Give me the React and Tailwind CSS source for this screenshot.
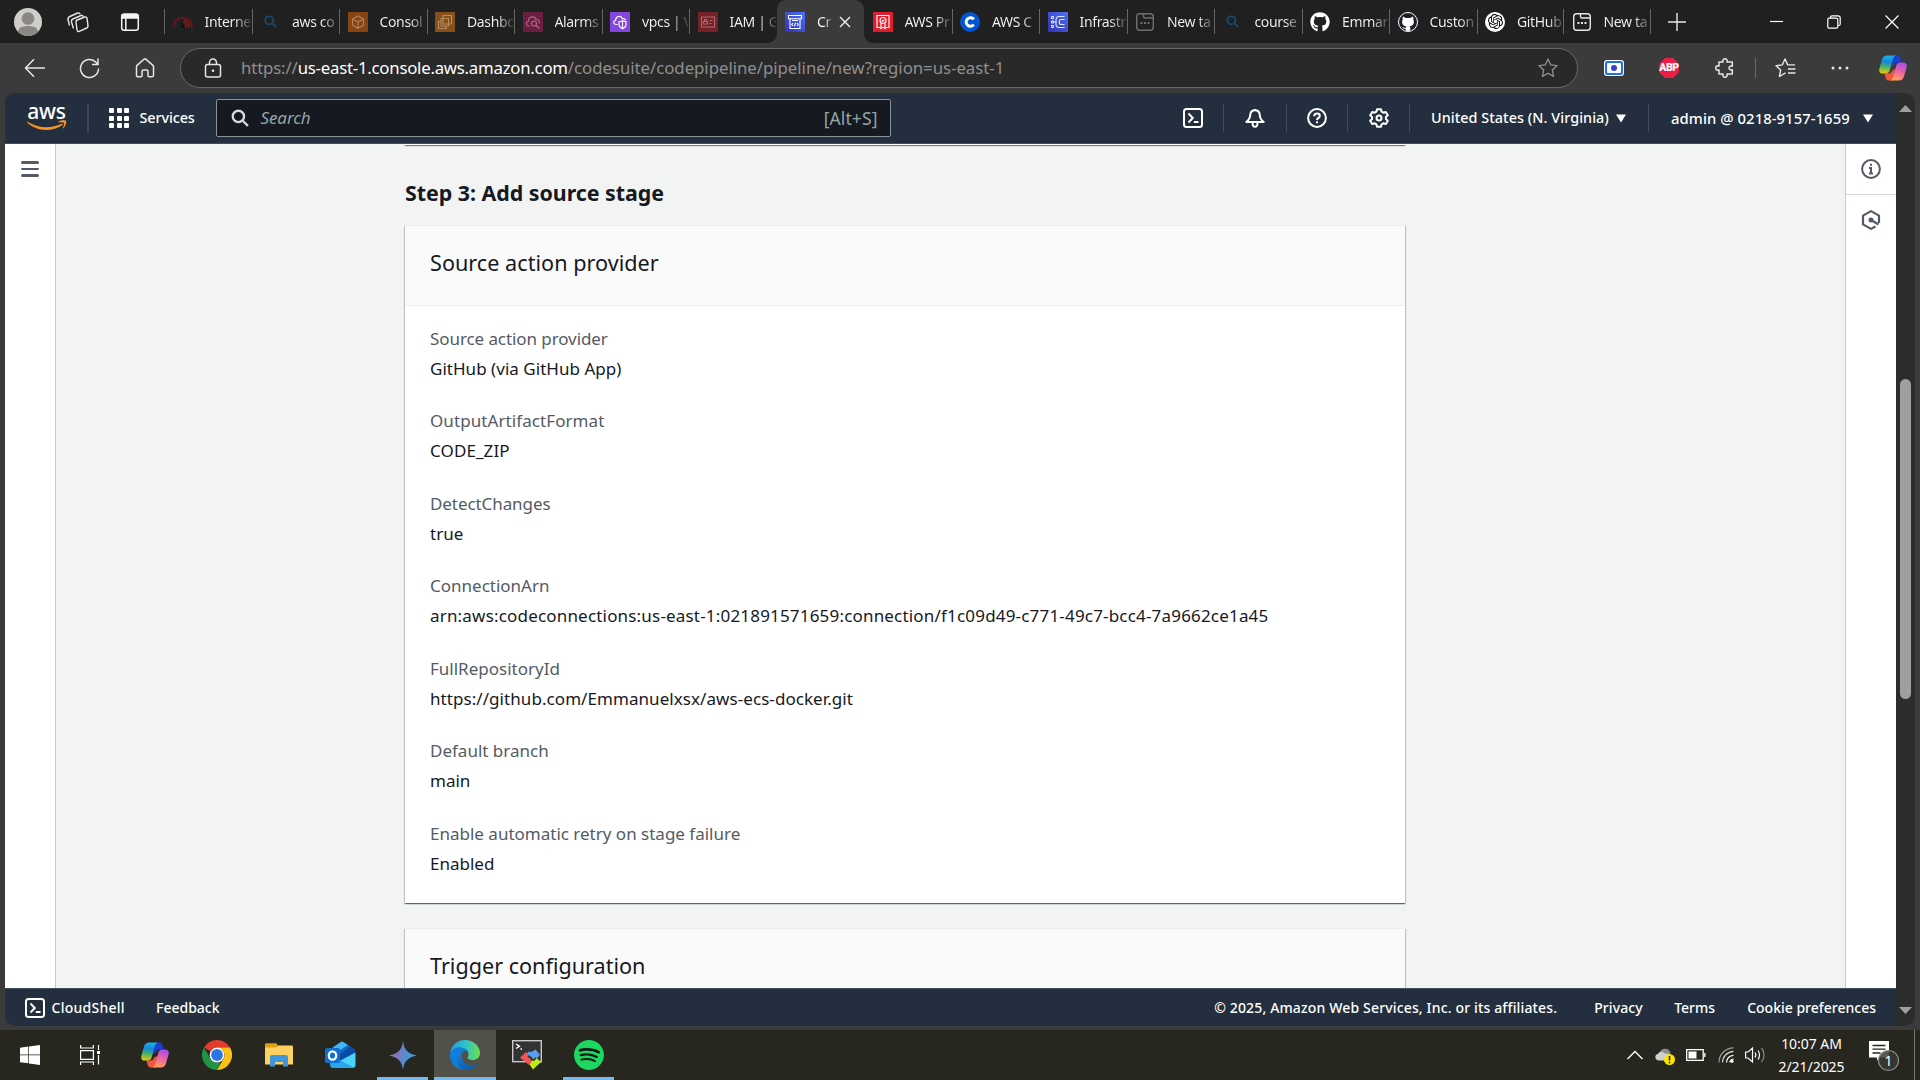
import React from "react";
import { FaGithub } from "react-icons/fa";
import { SiOpenai, SiSpotify } from "react-icons/si";

/* ---------- small shared drawings ---------- */

function CopilotIcon({ id, size }) {
  return (
    <svg width={size} height={size} viewBox="0 0 28 28">
      <defs>
        <linearGradient id={id + "a"} x1="0.4" y1="0" x2="0.3" y2="1">
          <stop offset="0" stopColor="#17b0ee" />
          <stop offset="0.35" stopColor="#1688d8" />
          <stop offset="0.65" stopColor="#4fb45c" />
          <stop offset="1" stopColor="#f3c90b" />
        </linearGradient>
        <linearGradient id={id + "b"} x1="0.7" y1="0" x2="0.4" y2="1">
          <stop offset="0" stopColor="#a04df2" />
          <stop offset="0.45" stopColor="#e95fa8" />
          <stop offset="1" stopColor="#ffa15c" />
        </linearGradient>
      </defs>
      <path d="M14 1.5h4.2c1.6 0 2.6 1 3.1 2.6l1.3 4.4h-4c-2 0-3.2.9-3.8 2.9L12 13z" fill="#1a3fd0" />
      <path d="M14 26.5H9.8c-1.600 0-2.600-1-3.100-2.600L5.400 19.500h4c2 0 3.200-.9 3.800-2.900L16 15z" fill="#f0573c" />
      <path d="M8.200 1.500h9.300c-1.800 0-2.900 1.300-3.500 3.300l-3.200 11.300c-.6 2.200-1.800 3.500-3.900 3.500H3.600C1 19.600-.3 17.500.4 14.700L3 5.600C3.800 2.900 5.600 1.500 8.200 1.500z" fill={"url(#" + id + "a)"} />
      <path d="M19.800 26.500h-9.300c1.800 0 2.900-1.300 3.500-3.300l3.200-11.300c.6-2.200 1.800-3.500 3.900-3.500h3.300c2.600 0 3.900 2.100 3.200 4.900L25 22.400c-.8 2.700-2.600 4.100-5.200 4.100z" fill={"url(#" + id + "b)"} />
    </svg>
  );
}

function CloudShellIcon() {
  return (
    <svg width="20" height="20" viewBox="0 0 20 20" fill="none" stroke="#fff" strokeWidth="2">
      <rect x="1" y="1" width="18" height="18" rx="2.500" />
      <path d="M5.500 5.500L9.800 10l-4.300 4.500M10.800 14h4.700" />
    </svg>
  );
}

function MagnifierIcon({ className }) {
  return (
    <svg className={className} viewBox="0 0 20 20" fill="none" stroke="currentColor" strokeWidth="2.600">
      <circle cx="8.200" cy="8.200" r="6.300" />
      <path d="M12.800 12.800l6 6" />
    </svg>
  );
}

/* ---------- favicons ---------- */

const gaugeIcon = (
  <svg width="20" height="20" viewBox="0 0 20 20" fill="none">
    <path d="M1 15.500C1 9 5 5.500 10 5.500s9 3.500 9 10" stroke="#74161d" strokeWidth="1.600" />
    <path d="M11 8c3 .5 5 3 5.300 7.500M10.500 10.500c1.800.5 3 2.300 3.200 5" stroke="#8b1c25" strokeWidth="1.500" />
    <path d="M8 8.500v7.500h4z" fill="#111" />
  </svg>
);
const searchFavicon = (
  <div className="flex size-5 items-center justify-center">
    <MagnifierIcon className="size-[13px] text-[#1b4a70]" />
  </div>
);
const cubeIcon = (
  <svg width="20" height="20" viewBox="0 0 20 20" fill="none" stroke="#b0835c">
    <rect width="20" height="20" fill="#854412" stroke="none" />
    <path d="M10 4l5.500 3v6.200L10 16.300l-5.500-3.100V7zM4.500 7l5.500 3 5.500-3M10 10v6.300" strokeWidth="1.200" />
  </svg>
);
const dashboardIcon = (
  <svg width="20" height="20" viewBox="0 0 20 20" fill="none" stroke="#b68c60">
    <rect width="20" height="20" fill="#85501a" stroke="none" />
    <path d="M8 3.500h8.500V12H8zM6 6.500h7.500V14H6zM5.500 9.500h-2v7H11v-2" strokeWidth="1.100" />
  </svg>
);
const alarmsIcon = (
  <svg width="20" height="20" viewBox="0 0 20 20" fill="none" stroke="#a8688a">
    <rect width="20" height="20" fill="#6b1e3f" stroke="none" />
    <path d="M7 14H5.500C2.500 13.500 2.700 9.800 5.300 9.500 5.500 4 12 3.500 13 7.500c2.500 0 4 2 3.300 4" strokeWidth="1.200" />
    <circle cx="11" cy="11.500" r="2.500" strokeWidth="1.200" />
    <path d="M13 13.500l3.500 3" strokeWidth="1.400" />
  </svg>
);
const vpcIcon = (
  <svg width="20" height="20" viewBox="0 0 20 20" fill="none" stroke="#fff">
    <rect width="20" height="20" fill="#8347e0" stroke="none" />
    <path d="M7.500 12.500H6C3 12.200 3 8.800 5.500 8.500 5.700 4 11 3 12.300 6.700c1.500-.2 3 .6 3.400 1.800" strokeWidth="1.200" />
    <path d="M9 9.500c2 0 3-.8 3.500-.8s1.500.8 3.500.8v3.200c0 2-1.500 3-3.500 4-2-1-3.500-2-3.500-4zM12.500 8.700v8" strokeWidth="1.100" />
  </svg>
);
const iamIcon = (
  <svg width="20" height="20" viewBox="0 0 20 20" fill="none" stroke="#b0686c">
    <rect width="20" height="20" fill="#74222a" stroke="none" />
    <path d="M3.500 5h13v10h-13zM11.500 8.500h3M11.500 11.500h2M5.500 9.500h4V12h-4zM6.500 9.500V7.500h2v2" strokeWidth="1.100" />
  </svg>
);
const pipelineIcon = (
  <svg width="20" height="20" viewBox="0 0 20 20" fill="none" stroke="#fff">
    <defs>
      <linearGradient id="pipe" x1="0" y1="1" x2="1" y2="0">
        <stop offset="0" stopColor="#3030b8" />
        <stop offset="1" stopColor="#4d72f3" />
      </linearGradient>
    </defs>
    <rect width="20" height="20" fill="url(#pipe)" stroke="none" />
    <path d="M3.500 3.500h13v3.200h-13zM5 6.700v9.800h10V6.700M7 8.500h6M8 11l-1.300 1.500L8 14M12 11l1.300 1.500L12 14M10.600 10.800l-1.200 3.400" strokeWidth="1.100" />
  </svg>
);
const certIcon = (
  <svg width="20" height="20" viewBox="0 0 20 20" fill="none" stroke="#fff">
    <rect width="20" height="20" fill="#df1f2d" stroke="none" />
    <path d="M7.500 15.500H4v-12h12v12h-3.500" strokeWidth="1.100" />
    <circle cx="10" cy="8.500" r="3" strokeWidth="1.100" />
    <path d="M8.700 8.500l1 1 1.700-2M8 11.500v5l2-1.200 2 1.200v-5" strokeWidth="1.100" />
  </svg>
);
const courseraIcon = (
  <svg width="20" height="20" viewBox="0 0 20 20" fill="none">
    <circle cx="10" cy="10" r="10" fill="#0056d2" />
    <path d="M13.800 7.300A4.300 4.300 0 1 0 13.800 12.700" stroke="#fff" strokeWidth="2.900" />
  </svg>
);
const infraIcon = (
  <svg width="20" height="20" viewBox="0 0 20 20" fill="none" stroke="#e4e8ff" strokeWidth="1.100">
    <rect width="20" height="20" fill="url(#pipe)" stroke="none" />
    <circle cx="4.500" cy="5.500" r="1.100" />
    <circle cx="4.500" cy="10" r="1.100" />
    <circle cx="4.500" cy="14.500" r="1.100" />
    <path d="M5.800 10H8M16.500 4.500h-5.500a3 3 0 0 0-3 3v5a3 3 0 0 0 3 3h5.500" />
    <path d="M16.500 7.500h-3.500c-1 0-1.700.7-1.700 1.700v1.600c0 1 .7 1.700 1.700 1.700h3.500" />
  </svg>
);
function NewTabIcon({ color }) {
  return (
    <svg width="20" height="20" viewBox="0 0 20 20" fill="none" stroke={color} strokeWidth="1.400">
      <rect x="1.700" y="1.700" width="16.600" height="16.600" rx="3" />
      <path d="M8.500 2v2.500c0 1 .5 1.500 1.500 1.500h8" />
      <path d="M5.500 11h2M9 11h2M12.500 11h2" strokeWidth="2" />
    </svg>
  );
}
const githubIcon = <FaGithub className="size-5 text-white" />;
const githubBadge = (
  <div className="flex size-5 items-end justify-center overflow-hidden rounded-full border border-white bg-[#1b1f2a]">
    <svg width="14" height="16" viewBox="0 0 14 16" fill="#fff">
      <path d="M2 1.500L4.800 3h4.400L12 1.500c.6 1.300.5 2.500.3 3.200 1.500 2.800.3 6-3.600 6.500.4.5.6 1.200.6 2V16H4.700v-2.200c-2 .3-2.700-.8-3.200-1.800 1.500.5 2.200 1.200 3.300.8 0-.7.2-1.200.5-1.600-3.900-.5-5.100-3.700-3.600-6.500C1.500 4 1.400 2.800 2 1.500z" />
    </svg>
  </div>
);
const openaiBadge = (
  <div className="flex size-5 items-center justify-center rounded-full bg-white">
    <SiOpenai className="size-[15px] text-black" />
  </div>
);

const tabs = [
  { icon: gaugeIcon, title: "Interne" },
  { icon: searchFavicon, title: "aws co" },
  { icon: cubeIcon, title: "Consol" },
  { icon: dashboardIcon, title: "Dashbo" },
  { icon: alarmsIcon, title: "Alarms" },
  { icon: vpcIcon, title: "vpcs | V" },
  { icon: iamIcon, title: "IAM | G" },
  { icon: pipelineIcon, title: "Cr", active: true },
  { icon: certIcon, title: "AWS Pr", noSep: true },
  { icon: courseraIcon, title: "AWS C" },
  { icon: infraIcon, title: "Infrastr" },
  { icon: <NewTabIcon color="#6e6e6e" />, title: "New ta" },
  { icon: searchFavicon, title: "course" },
  { icon: githubIcon, title: "Emmar" },
  { icon: githubBadge, title: "Custon" },
  { icon: openaiBadge, title: "GitHub", narrow: true },
  { icon: <NewTabIcon color="#e6e6e6" />, title: "New ta", narrow: true },
];

function Tab({ icon, title, active, noSep, narrow }) {
  if (active) {
    return (
      <div className="relative flex h-[43px] w-[87.500px] shrink-0 items-center rounded-t-[9px] bg-[#3b3b3b] pl-2">
        <svg className="absolute bottom-0 -left-2.5" width="10" height="10" viewBox="0 0 10 10">
          <path d="M10 0v10H0C6 10 10 6 10 0z" fill="#3b3b3b" />
        </svg>
        <svg className="absolute -right-2.5 bottom-0" width="10" height="10" viewBox="0 0 10 10">
          <path d="M0 0v10h10C4 10 0 6 0 0z" fill="#3b3b3b" />
        </svg>
        <div className="size-5 shrink-0">{icon}</div>
        <div className="ml-[12.500px] w-[15px] bg-gradient-to-r from-white from-50% to-[#666] bg-clip-text text-[14px] tracking-[-0.3px] whitespace-nowrap text-transparent">
          {title}
        </div>
        <svg className="ml-[7px]" width="12" height="12" viewBox="0 0 12 12" stroke="#f2f2f2" strokeWidth="1.400">
          <path d="M1 1l10 10M11 1L1 11" />
        </svg>
      </div>
    );
  }
  return (
    <div className={"flex h-[43px] shrink-0 items-center " + (narrow ? "w-[86.500px]" : "w-[87.500px]")}>
      <div className={noSep ? "h-[25px] w-px" : "h-[25px] w-px bg-[#666]"} />
      <div className="ml-[7.500px] size-5 shrink-0">{icon}</div>
      <div className="ml-3 w-[46px] bg-gradient-to-r from-[#f4f4f4] from-65% to-[#444] bg-clip-text text-[14px] tracking-[-0.350px] whitespace-nowrap text-transparent">
        {title}
      </div>
    </div>
  );
}

function TabStrip() {
  return (
    <div className="flex h-[43px] shrink-0 items-center bg-[#202020]">
      <div className="ml-3.5 size-7 overflow-hidden rounded-full bg-[#cfcdca]">
        <svg width="28" height="28" viewBox="0 0 28 28" fill="#8b8783">
          <circle cx="14" cy="10.500" r="6.300" />
          <path d="M4 24c0-4 4-6 10-6s10 2 10 6c-2.500 3-6 4-10 4s-7.500-1-10-4z" />
        </svg>
      </div>
      <svg className="ml-[25px]" width="22" height="22" viewBox="0 0 22 22" fill="#202020" stroke="#e8e8e8" strokeWidth="1.400" strokeLinejoin="round">
        <path d="M2.500 14.500L1 8.500C.8 7 1.500 6 2.800 5.500l8-3.500c1-.3 2 .2 2.300 1.200" fill="none" />
        <path d="M6.500 17.500L4.500 11c-.3-1.500.2-2.500 1.500-3l8-3.500c1-.3 2 .2 2.300 1.200" fill="none" />
        <path d="M9 11.500c-.3-1.300.2-2 1.200-2.500l7.600-3c1-.3 2 .2 2.200 1.200l1 7.600c.1 1-.4 1.900-1.200 2.200l-7.600 3.400c-1 .4-1.900-.2-2.100-1.200z" />
      </svg>
      <svg className="ml-[31px]" width="20" height="20" viewBox="0 0 20 20" fill="none" stroke="#f4f4f4" strokeWidth="1.500">
        <rect x="1.700" y="2.200" width="16.600" height="16" rx="2.500" />
        <path d="M1.700 6V4.500A2.500 2.500 0 0 1 4 2.200h12a2.500 2.500 0 0 1 2.300 2.300V6z" fill="#f4f4f4" />
        <path d="M5.800 6v12" />
      </svg>
      <div className="ml-6 flex">
        {tabs.map((t, i) => (
          <Tab key={i} {...t} />
        ))}
      </div>
      <div className="h-[25px] w-px bg-[#666]" />
      <svg className="ml-[17.500px]" width="18" height="18" viewBox="0 0 18 18" stroke="#e8e8e8" strokeWidth="1.400">
        <path d="M0 9h18M9 0v18" />
      </svg>
      <svg className="ml-[84px]" width="13" height="13" viewBox="0 0 13 13" stroke="#fff" strokeWidth="1.200">
        <path d="M0 6.500h13" />
      </svg>
      <svg className="ml-11" width="14" height="14" viewBox="0 0 14 14" fill="none" stroke="#fff" strokeWidth="1.200">
        <rect x="0.800" y="3.200" width="10" height="10" rx="1.500" />
        <path d="M3.500 3V2.300C3.500 1.400 4 .8 5 .8h6c1.400 0 2.200.8 2.200 2.200v6c0 1-.6 1.500-1.500 1.500H11" />
      </svg>
      <svg className="ml-[44px]" width="14" height="14" viewBox="0 0 14 14" stroke="#fff" strokeWidth="1.200">
        <path d="M.5.5l13 13M13.500.5l-13 13" />
      </svg>
    </div>
  );
}

function Toolbar() {
  return (
    <div className="flex h-[50px] shrink-0 items-center bg-[#3b3b3b]">
      <svg className="ml-6" width="22" height="20" viewBox="0 0 22 20" fill="none" stroke="#e6e6e6" strokeWidth="1.500">
        <path d="M10 1.200L1.500 10l8.500 8.800M1.500 10H21" />
      </svg>
      <svg className="ml-[33px]" width="21" height="21" viewBox="0 0 21 21" fill="none" stroke="#e6e6e6" strokeWidth="1.500">
        <path d="M19.500 10.500a9 9 0 1 1-2.500-6.200L19 6.500M19 .5v6h-6" />
      </svg>
      <svg className="ml-[35px]" width="20" height="20" viewBox="0 0 20 20" fill="none" stroke="#e6e6e6" strokeWidth="1.500" strokeLinejoin="round">
        <path d="M1.500 8.800c0-.7.3-1.200.8-1.700L9 1.300c.6-.5 1.400-.5 2 0l6.700 5.800c.5.500.8 1 .8 1.700v8.400c0 1-.6 1.600-1.600 1.600h-2.700c-.7 0-1.200-.5-1.200-1.200v-4.400c0-.7-.5-1.200-1.200-1.200H8.200c-.7 0-1.200.5-1.200 1.200v4.400c0 .7-.5 1.200-1.200 1.200H3.100c-1 0-1.600-.6-1.600-1.600z" />
      </svg>
      <div className="ml-[25px] flex h-10 w-[1398px] items-center rounded-full border border-[#686868] bg-[#292929]">
        <svg className="ml-[23px]" width="18" height="20" viewBox="0 0 18 20" fill="none" stroke="#e6e6e6" strokeWidth="1.500">
          <rect x="1.500" y="6.500" width="15" height="12.500" rx="2" />
          <path d="M5.500 6.500V4.500a3.500 3.500 0 0 1 7 0v2" />
          <circle cx="9" cy="12.800" r="1.300" fill="#e6e6e6" stroke="none" />
        </svg>
        <div className="ml-[19px] flex flex-1 text-[16.800px] leading-none text-[#8f8f8f]">
          <span className="tracking-[-0.150px]">https://</span>
          <span className="tracking-[-0.240px] text-white">us-east-1.console.aws.amazon.com</span>
          <span className="tracking-[-0.030px]">/codesuite/codepipeline/pipeline/new?region=us-east-1</span>
        </div>
        <svg className="mr-[19px]" width="20" height="20" viewBox="0 0 20 20" fill="none" stroke="#8f8f8f" strokeWidth="1.300" strokeLinejoin="round">
          <path d="M10 1l2.700 5.900 6.300.8-4.700 4.300 1.300 6.400L10 15.200l-5.600 3.200 1.300-6.400L1 7.700l6.300-.8z" />
        </svg>
      </div>
      <svg className="ml-[26px]" width="20" height="16" viewBox="0 0 20 16">
        <rect width="20" height="16" rx="3" fill="#fff" />
        <rect x="1" y="1" width="18" height="14" rx="2.500" fill="#1d6ff2" />
        <rect x="3" y="3" width="14" height="10" rx="1" fill="#fff" />
        <circle cx="10" cy="8" r="3" fill="#3045c9" />
      </svg>
      <div className="relative ml-[35px] flex size-5 items-center justify-center">
        <svg className="absolute inset-0" width="20" height="20" viewBox="0 0 20 20">
          <path d="M5.900 0h8.200L20 5.900v8.200L14.100 20H5.900L0 14.100V5.900z" fill="#ed1e45" />
        </svg>
        <span className="relative font-['Roboto'] text-[10.500px] leading-none font-black tracking-[-0.5px] text-white">ABP</span>
      </div>
      <svg className="ml-[36px]" width="20" height="20" viewBox="0 0 20 20" fill="none" stroke="#e6e6e6" strokeWidth="1.500" strokeLinejoin="round">
        <path d="M4 4h4c-.5-2 .5-3.300 2-3.300S12.500 2 12 4h5.300v4.200c-1.800-.6-3.300.3-3.300 1.800s1.500 2.400 3.300 1.800V16H12c.5 2-.5 3.300-2 3.300S7.500 18 8 16H4v-4c-2 .5-3.300-.5-3.300-2S2 7.500 4 8z" />
      </svg>
      <div className="ml-5 h-5 w-px bg-[#6a6a6a]" />
      <svg className="ml-[19px]" width="21" height="20" viewBox="0 0 21 20" fill="none" stroke="#e6e6e6" strokeWidth="1.400" strokeLinejoin="round">
        <path d="M10.500 14.800L4.400 18.500 5.700 12 1 7.700l6.300-.8L10 1l2.700 5.900H20M13 11h7.500M13 15h7.500" />
      </svg>
      <svg className="ml-[35px]" width="18" height="4" viewBox="0 0 18 4" fill="#e6e6e6">
        <circle cx="2" cy="2" r="1.500" />
        <circle cx="9" cy="2" r="1.500" />
        <circle cx="16" cy="2" r="1.500" />
      </svg>
      <div className="ml-[30px]">
        <CopilotIcon id="cpTop" size={28} />
      </div>
    </div>
  );
}

function Caret() {
  return (
    <svg width="10" height="9" viewBox="0 0 10 9" fill="#fff">
      <path d="M0 .5h10L5 8.500z" />
    </svg>
  );
}
function Bar() {
  return <div className="h-7 w-px bg-[#414d5c]" />;
}

function AwsHeader() {
  return (
    <div className="flex h-[51px] shrink-0 items-center rounded-tl-[9px] border-b border-[#414d5c] bg-[#232f3e] text-white">
      <div className="ml-[22px] flex w-10 flex-col items-center">
        <div className="-mt-[6px] -ml-[1px] text-[21px] leading-[22px] font-medium tracking-[-0.3px]">aws</div>
        <svg className="-mt-0.5" width="40" height="11" viewBox="0 0 40 11" fill="#f7941d">
          <path d="M.3 1.500C11 8.500 24 9 34.500 3.800c1-.4 1.800.6.9 1.300C25 12.300 9.500 11.800.2 2.600-.2 2 0 1.300.3 1.500z" />
          <path d="M31.500 1.500c2.500-1.600 6.700-1.600 7.500-.7.700.9-.2 5.500-2.600 7.500-.4.300-.8.200-.6-.3.600-1.400 1.700-4.400 1.200-5.100-.5-.6-3.500-.5-5.200-.7-.5-.1-.6-.5-.3-.7z" />
        </svg>
      </div>
      <div className="ml-5 h-7 w-0.5 bg-[#414750]" />
      <div className="ml-5 grid grid-cols-3 gap-[2.500px]">
        {[0, 1, 2, 3, 4, 5, 6, 7, 8].map((i) => (
          <div key={i} className="size-[5px] rounded-[1px] bg-white" />
        ))}
      </div>
      <div className="ml-[10.500px] w-[76px] text-[14.400px] font-medium tracking-[-0.1px]">Services</div>
      <div className="flex h-[38px] w-[675px] items-center rounded-[2px] border border-[#879596] bg-[#161920]">
        <MagnifierIcon className="ml-3.5 size-[18px] text-[#d5dbdb]" />
        <div className="ml-3 flex-1 text-[17px] tracking-[-0.1px] text-[#95a5a6] italic">Search</div>
        <div className="mr-3 text-[17.500px] tracking-[0.1px] text-[#95a5a6]">[Alt+S]</div>
      </div>
      <div className="ml-[292px] flex items-center">
        <CloudShellIcon />
        <div className="ml-5"><Bar /></div>
        <svg className="ml-[21px]" width="20" height="20" viewBox="0 0 20 20" fill="none" stroke="#fff" strokeWidth="2" strokeLinejoin="round">
          <path d="M10 1v1.500M10 2.200c-3 0-4.500 2-4.700 4.500-.2 3.300-1 5-4 7.300h17.400c-3-2.300-3.800-4-4-7.300C14.500 4.200 13 2.200 10 2.200zM7.500 14.500c0 3 1 4.300 2.500 4.300s2.500-1.300 2.500-4.300" />
        </svg>
        <div className="ml-[21px]"><Bar /></div>
        <svg className="ml-5" width="20" height="20" viewBox="0 0 20 20" fill="none" stroke="#fff" strokeWidth="2">
          <circle cx="10" cy="10" r="8.900" />
          <path d="M7.200 8.200C7.200 6.500 8.300 5.600 10 5.600s2.800.9 2.800 2.300c0 2-2.800 2-2.800 4.100M10 13.300v2" />
        </svg>
        <div className="ml-5"><Bar /></div>
        <svg className="ml-[21px]" width="20" height="20" viewBox="0 0 20 20" fill="none" stroke="#fff" strokeWidth="2" strokeLinejoin="round">
          <path d="M8 1.200h4l.6 2.500 1.700 1 2.500-.8 2 3.400-1.900 1.800v1.800l1.900 1.800-2 3.400-2.500-.8-1.700 1-.6 2.500H8l-.6-2.500-1.700-1-2.500.8-2-3.400 1.900-1.800V9.100L1.200 7.300l2-3.400 2.500.8 1.700-1z" />
          <circle cx="10" cy="10" r="2.500" />
        </svg>
        <div className="ml-[20px]"><Bar /></div>
        <div className="ml-[21.500px] w-[185px] text-[14.400px] font-medium tracking-[0.050px] whitespace-nowrap">United States (N. Virginia)</div>
        <Caret />
        <div className="ml-[22px]"><Bar /></div>
        <div className="ml-[22px] w-[191.500px] text-[14.800px] font-medium tracking-[0.080px] whitespace-nowrap">admin @ 0218-9157-1659</div>
        <Caret />
      </div>
    </div>
  );
}

const cardShadow =
  "shadow-[0_1px_1px_0_rgba(0,28,36,0.5),1px_1px_1px_0_rgba(0,28,36,0.15),-1px_1px_1px_0_rgba(0,28,36,0.15)]";

const fields = [
  ["Source action provider", "GitHub (via GitHub App)", "tracking-[0.030px]", "tracking-[-0.080px]"],
  ["OutputArtifactFormat", "CODE_ZIP", "tracking-[0.1px]", "tracking-[0.080px]"],
  ["DetectChanges", "true", "tracking-normal", "tracking-[-0.080px]"],
  ["ConnectionArn", "arn:aws:codeconnections:us-east-1:021891571659:connection/f1c09d49-c771-49c7-bcc4-7a9662ce1a45", "tracking-[0.185px]", "tracking-normal"],
  ["FullRepositoryId", "https://github.com/Emmanuelxsx/aws-ecs-docker.git", "tracking-[0.065px]", "tracking-normal"],
  ["Default branch", "main", "tracking-normal", "tracking-normal"],
  ["Enable automatic retry on stage failure", "Enabled", "tracking-normal", "tracking-normal"],
];

function MainContent() {
  return (
    <div className="flex h-[844px] shrink-0 overflow-hidden bg-[#f2f3f3]">
      <div className="w-[51px] shrink-0 border-r border-[#c3c9ca] bg-white">
        <div className="mt-[17px] ml-4 flex w-[18px] flex-col gap-[4px]">
          <div className="h-[2.500px] rounded-full bg-[#545b64]" />
          <div className="h-[2.500px] rounded-full bg-[#545b64]" />
          <div className="h-[2.500px] rounded-full bg-[#545b64]" />
        </div>
      </div>
      <div className="flex flex-1 flex-col pl-[349px] text-[#16191f]">
        <div className={"h-px w-[1000px] shrink-0 bg-white " + cardShadow} />
        <h2 className="mt-[32px] h-8 text-[21.400px] leading-8 font-bold tracking-[-0.030px]">Step 3: Add source stage</h2>
        <section className={"mt-[16px] h-[678px] w-[1000px] shrink-0 border-t border-[#eaeded] bg-white " + cardShadow}>
          <div className="flex h-[80px] items-center border-b border-[#eaeded] bg-[#fafafa] px-[25px] pb-1 text-[21.600px] tracking-[0.030px]">
            Source action provider
          </div>
          <div className="flex flex-col gap-[25px] px-[25px] pt-[18.500px]">
            {fields.map(([label, value, track, labelTrack]) => (
              <div key={label} className="flex flex-col gap-[2.500px] text-[17px] leading-[27.500px]">
                <div className={"text-[#545b64] " + labelTrack}>{label}</div>
                <div className={track}>{value}</div>
              </div>
            ))}
          </div>
        </section>
        <section className={"mt-[25px] h-[120px] w-[1000px] shrink-0 border-t border-[#eaeded] bg-[#fafafa] px-[25px] " + cardShadow}>
          <div className="flex h-[79px] items-center pb-[5px] text-[21.600px]">Trigger configuration</div>
        </section>
      </div>
      <div className="w-[51px] shrink-0 border-l border-[#c3c9ca] bg-white">
        <div className="flex h-[51px] items-center justify-center border-b border-[#d5dbdb]">
          <svg width="20" height="20" viewBox="0 0 20 20" fill="none" stroke="#545b64" strokeWidth="2">
            <circle cx="10" cy="10" r="8.900" />
            <path d="M10 4.800v2M8 9h2v5.500M8 14.500h4" />
          </svg>
        </div>
        <div className="flex h-[50px] items-center justify-center">
          <svg width="20" height="20" viewBox="0 0 20 20" fill="none" stroke="#545b64" strokeWidth="2.200" strokeLinejoin="round">
            <path d="M14.500 16.500L10 18.900l-8-4.500V5.600l8-4.500 8 4.500v7.400" />
            <circle cx="10" cy="10" r="2.500" fill="#545b64" stroke="none" />
            <path d="M10 10l7.500 4.500" />
          </svg>
        </div>
      </div>
    </div>
  );
}

function AwsFooter() {
  return (
    <div className="flex h-[38px] shrink-0 items-center rounded-bl-[10px] border-t border-[#414d5c] bg-[#232f3e] text-[14px] font-medium whitespace-nowrap text-white">
      <div className="ml-5"><CloudShellIcon /></div>
      <div className="ml-[6.500px] w-[104.500px] tracking-[0.250px]">CloudShell</div>
      <div>Feedback</div>
      <div className="ml-auto w-[380px] tracking-[0.150px]">© 2025, Amazon Web Services, Inc. or its affiliates.</div>
      <div className="w-20 tracking-[0.1px]">Privacy</div>
      <div className="w-[73px]">Terms</div>
      <div className="mr-5">Cookie preferences</div>
    </div>
  );
}

function ScrollBar() {
  return (
    <div className="flex w-[19px] shrink-0 flex-col items-center rounded-r-[10px] bg-[#2c2c2c]">
      <svg className="mt-3" width="13" height="7" viewBox="0 0 13 7" fill="#9f9f9f">
        <path d="M6.500 0L13 7H0z" />
      </svg>
      <div className="mt-[267px] h-80 w-[11px] rounded-full bg-[#9f9f9f]" />
      <svg className="mt-[308px]" width="13" height="7" viewBox="0 0 13 7" fill="#9f9f9f">
        <path d="M6.500 7L13 0H0z" />
      </svg>
    </div>
  );
}

/* ---------- taskbar ---------- */

const windowsIcon = (
  <svg width="20" height="20" viewBox="0 0 20 20" fill="#fff">
    <path d="M0 2.800L8.300 1.600v8H0zM9 1.500L20 0v9.600H9zM0 10.300h8.300v8L0 17.200zM9 10.300h11V20L9 18.400z" />
  </svg>
);
const taskViewIcon = (
  <svg width="21" height="20" viewBox="0 0 21 20" fill="none" stroke="#fff" strokeWidth="1.200">
    <path d="M.6 0v3h12.800V0M.6 20v-3h12.800v3M.6 5.600h12.800v8.800H.6zM18.500 0v5M18.500 10v9.500" />
    <path d="M17 6h3v3h-3z" fill="#fff" stroke="none" />
  </svg>
);
const chromeIcon = (
  <svg width="30" height="30" viewBox="0 0 30 30">
    <path d="M15 0c5.500 0 10.400 3 13 7.500H15a7.500 7.500 0 0 0-6.500 3.700L2 7.500A15 15 0 0 1 15 0z" fill="#e33b2e" />
    <path d="M2 7.500l6.500 11.300A7.500 7.500 0 0 0 15 22.500l3.500.0L15 30A15 15 0 0 1 2 7.500z" fill="#229342" />
    <path d="M28 7.500A15 15 0 0 1 15 30l6.500-11.200A7.500 7.500 0 0 0 20 9.400L15 7.500z" fill="#fbc116" />
    <circle cx="15" cy="15" r="7.400" fill="#fff" />
    <circle cx="15" cy="15" r="5.900" fill="#2b76e5" />
  </svg>
);
const folderIcon = (
  <svg width="28" height="24" viewBox="0 0 28 24">
    <path d="M0 1.500C0 .7.500.2 1.300.2h10l2.500 3.300H28V12H0z" fill="#e0a010" />
    <path d="M0 4.500h11.500l2-2H26.500c.9 0 1.500.6 1.500 1.500v17.500H0z" fill="#fdd160" />
    <path d="M5 23.500V14c0-1.200.8-2 2-2h14c1.200 0 2 .8 2 2v9.500h-5V19h-8v4.500z" fill="#3f95de" />
  </svg>
);
const outlookIcon = (
  <svg width="31" height="28" viewBox="0 0 31 28">
    <path d="M4 9L15.500 1.200c1-.6 2-.6 3 0L30 8.500V12L16 20 4 12z" fill="#1269c7" />
    <path d="M8 6.300l7.500-5c1-.6 2-.6 3 0L23 4 9 13z" fill="#3fb6f2" />
    <path d="M25 5.500l5 3.300V13L16 21l-6-4z" fill="#0a4ba5" />
    <path d="M30.500 11.500V24c0 1.700-1 2.700-2.700 2.700H8c-1.500 0-2.500-1-2.500-2z" fill="#48d3f8" />
    <path d="M5 14l23 12c-.3.600-.8.700-1.500.7H8.500C6.500 26.700 5 25.500 5 23.500z" fill="#2aa5ea" />
    <rect x="0" y="7" width="15" height="15" rx="1.800" fill="#0f6fd0" />
    <ellipse cx="7.500" cy="14.500" rx="3.700" ry="4.200" fill="none" stroke="#fff" strokeWidth="2.200" />
  </svg>
);
const geminiIcon = (
  <svg width="28" height="29" viewBox="0 0 28 29">
    <defs>
      <linearGradient id="gem" x1="0" y1="0.400" x2="1" y2="0.600">
        <stop offset="0" stopColor="#b56a9e" />
        <stop offset="0.450" stopColor="#6583c8" />
        <stop offset="1" stopColor="#2aa3e0" />
      </linearGradient>
    </defs>
    <path d="M14 0c1 8.500 5 13 14 14.500C19 16 15 20.500 14 29 13 20.500 9 16 0 14.500 9 13 13 8.500 14 0z" fill="url(#gem)" />
  </svg>
);
const edgeIcon = (
  <svg width="30" height="30" viewBox="0 0 30 30">
    <defs>
      <linearGradient id="edgeTop" x1="0" y1="0.500" x2="1" y2="0.600">
        <stop offset="0" stopColor="#1f9fe0" />
        <stop offset="0.500" stopColor="#2fc3c8" />
        <stop offset="1" stopColor="#6be04a" />
      </linearGradient>
      <linearGradient id="edgeLow" x1="0" y1="0" x2="0.800" y2="1">
        <stop offset="0" stopColor="#1681d8" />
        <stop offset="1" stopColor="#0c59a4" />
      </linearGradient>
    </defs>
    <path d="M0 14C.6 6 7 0 15 0c8.500 0 15 6.500 15 13 0 4.500-3.500 7-7.500 7-3.500 0-5-1.200-5-2 0-.6 1-1.300 1-3.500C18.500 10.500 15 7.500 10 7.500 5.500 7.500 1.500 10 0 14z" fill="url(#edgeTop)" />
    <path d="M0 14.500C1 10 5 7.500 10 7.500c3.500 0 6.500 1.500 8 4-4.500-1.500-7 1.500-7 4.500 0 5 5 9.500 10 9.500 2.800 0 5-1 6.300-1.700C25 27.700 20.500 30 15 30 6.500 30-.5 23 0 14.500z" fill="#0f7fdc" />
    <path d="M11.500 12.500C10 18.500 15 25.500 21 25.500c2.800 0 5-1 6.300-1.700C25 27.700 20.500 30 15 30 9 29 6.500 24.500 6.500 20.500c0-4 2-6.500 5-8z" fill="url(#edgeLow)" />
  </svg>
);
const terminalIcon = (
  <svg width="30" height="30" viewBox="0 0 30 30">
    <rect x="0.700" y="0.700" width="28.600" height="21" fill="#333" stroke="#c9c9c9" strokeWidth="1.400" />
    <path d="M4 4l3.500 2.300L4 8.500M8.500 9h1.500" stroke="#fff" strokeWidth="1.400" fill="none" />
    <path d="M8 17.500l6-5.500 3 2.500-1.500 2 3.500 3L19.500 22 17 25z" fill="#f05454" />
    <path d="M15 14l1.500-2.500 3 .5 4-2.500 4.500 5-2.500 3.500-2.500-.5-1.500 2-2-2.500z" fill="#5b9cf5" />
    <path d="M17.500 24.500l3-4 2 .5 2-3 4.500 4-8 7.500z" fill="#b5f012" />
  </svg>
);
const spotifyIcon = (
  <div className="flex size-[30px] items-center justify-center rounded-full bg-[#151815]">
    <SiSpotify className="size-[30px] text-[#1ed760]" />
  </div>
);

const taskItems = [
  { icon: <CopilotIcon id="cpTask" size={28} /> },
  { icon: chromeIcon },
  { icon: folderIcon },
  { icon: outlookIcon },
  { icon: geminiIcon, line: "w-[51px]" },
  { icon: edgeIcon, line: "w-full", active: true },
  { icon: terminalIcon },
  { icon: spotifyIcon, line: "w-[51px]" },
];

function Taskbar() {
  return (
    <div className="flex h-[50px] shrink-0 items-center bg-[#27261f] text-white">
      <div className="flex w-[60px] justify-center">{windowsIcon}</div>
      <div className="flex w-[63.500px] justify-start pl-5">{taskViewIcon}</div>
      {taskItems.map((t, i) => (
        <div key={i} className={t.active ? "relative flex h-full w-[62px] items-center justify-center bg-[#51514a]" : "relative flex h-full w-[62px] items-center justify-center"}>
          {t.icon}
          {t.line && <div className={"absolute bottom-0 h-[3px] bg-[#76b9ed] " + t.line} />}
        </div>
      ))}
      <div className="ml-auto flex h-full items-center">
        <svg width="16" height="10" viewBox="0 0 16 10" fill="none" stroke="#fff" strokeWidth="1.400">
          <path d="M.5 9L8 1.500 15.500 9" />
        </svg>
        <svg className="mt-1 ml-3" width="20" height="18" viewBox="0 0 20 18">
          <path d="M5 4C6 1 9 0 12 1c2.500.8 3.500 3 3.500 5L8 9z" fill="#8b8b8b" />
          <path d="M3.500 12.500C-.5 12-.8 6.500 3 6c1-2.800 5-3 7-.5 2.500-.5 5 .5 6 3l-4 4z" fill="#cfcfcf" />
          <circle cx="14.500" cy="11.500" r="5.500" fill="#fde300" />
          <path d="M14.500 8v4.500M14.500 13.800v1.400" stroke="#222" strokeWidth="1.500" />
        </svg>
        <svg className="ml-[11px]" width="20" height="12" viewBox="0 0 20 12" fill="none" stroke="#fff" strokeWidth="1.300">
          <path d="M.7.700h16.500v10.600H.7zM18.800 4v4" />
          <path d="M2.500 2.500h8v7h-8z" fill="#fff" stroke="none" />
        </svg>
        <svg className="ml-3" width="16" height="16" viewBox="0 0 16 16" fill="none" stroke="#fff" strokeWidth="1.200">
          <path d="M12 15.500c-.2-1.700.8-3 3.500-3.300M8.500 15.500c0-4 3-7 7-7.200" />
          <path d="M4.500 15.500c0-6 5-11 11-11.200" stroke="#ccc" />
          <path d="M1 15.500C1 7.500 7 1 15.500.8" stroke="#999" />
          <circle cx="14" cy="14.300" r="1.500" fill="#fff" stroke="none" />
        </svg>
        <svg className="ml-[11px]" width="21" height="18" viewBox="0 0 21 18" fill="none" stroke="#fff" strokeWidth="1.200">
          <path d="M.6 6v6H3l4.500 4V2L3 6zM10 6.500c1 1.500 1 3.500 0 5M13 4.500c2 2.500 2 6.500 0 9" />
          <path d="M16.500 2c3.300 3.500 3.300 10.500 0 14" stroke="#888" />
        </svg>
        <div className="mr-px ml-[9px] w-[73px] text-center text-[14px] leading-[23px] tracking-[-0.050px]">
          <div>10:07 AM</div>
          <div>2/21/2025</div>
        </div>
        <div className="relative ml-[20px] h-[34px] w-[30px]">
          <svg width="30" height="34" viewBox="0 0 30 34">
            <path d="M0 3h20v16.500h-9L8 22.500v-3H0z" fill="#fff" />
            <path d="M3.500 7.500h13M3.500 11.200h13M3.500 15h8" stroke="#27261f" strokeWidth="1.300" />
            <circle cx="19.500" cy="22.500" r="10" fill="#3a3a35" fillOpacity="0.850" stroke="#8d8d88" strokeWidth="1.200" />
          </svg>
          <span className="absolute top-[13px] left-[15px] w-[9px] text-center text-[14px] leading-5">1</span>
        </div>
        <div className="ml-[15px] h-full w-px bg-[#77766f]" />
        <div className="w-[5px]" />
      </div>
    </div>
  );
}

export default function App() {
  return (
    <div className="flex h-[1080px] w-[1920px] flex-col overflow-hidden bg-[#3b3b3b] font-['Noto_Sans',sans-serif]">
      <TabStrip />
      <Toolbar />
      <div className="flex h-[937px] shrink-0 px-[5px] pb-1">
        <div className="flex w-[1891px] shrink-0 flex-col">
          <AwsHeader />
          <MainContent />
          <AwsFooter />
        </div>
        <ScrollBar />
      </div>
      <Taskbar />
    </div>
  );
}
